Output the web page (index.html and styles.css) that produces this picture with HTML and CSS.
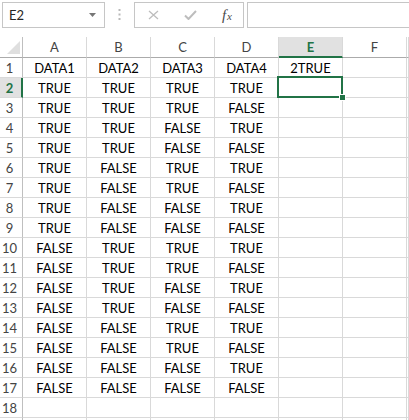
FILE: index.html
```html
<!DOCTYPE html>
<html>
<head>
<meta charset="utf-8">
<link rel="stylesheet" href="styles.css">
</head>
<body>
<div class="formula-bar">
  <div class="name-box">
    <span class="name-text">E2</span>
    <svg class="name-arrow" width="7" height="4" viewBox="0 0 7 4"><path d="M0 0H7L3.5 4Z" fill="#767676"/></svg>
  </div>
  <div class="grip">
    <svg width="3" height="11" viewBox="0 0 3 11"><rect x="0.5" y="0" width="2" height="2" fill="#b9b9b9"/><rect x="0.5" y="4.5" width="2" height="2" fill="#b9b9b9"/><rect x="0.5" y="9" width="2" height="2" fill="#b9b9b9"/></svg>
  </div>
  <div class="fx-box">
    <svg class="fx-icon" width="11" height="10" viewBox="0 0 11 10"><path d="M1 1L10 9M10 1L1 9" stroke="#bdbdbd" stroke-width="1.3" fill="none"/></svg>
    <svg class="fx-icon" width="13" height="10" viewBox="0 0 13 10"><path d="M1 5.5L4.5 9L12 1" stroke="#bdbdbd" stroke-width="2" fill="none"/></svg>
    <span class="fx-label">f<span class="fx-sub">x</span></span>
  </div>
  <div class="formula-input"></div>
</div>

<div class="sheet">
  <div class="corner"><span class="corner-tri"></span></div>
  <div class="col-head">A</div>
  <div class="col-head">B</div>
  <div class="col-head">C</div>
  <div class="col-head">D</div>
  <div class="col-head active">E</div>
  <div class="col-head">F</div>
  <div class="col-head"></div>

  <div class="row-head">1</div><div class="cell">DATA1</div><div class="cell">DATA2</div><div class="cell">DATA3</div><div class="cell">DATA4</div><div class="cell">2TRUE</div><div class="cell"></div><div class="cell"></div>
  <div class="row-head active">2</div><div class="cell">TRUE</div><div class="cell">TRUE</div><div class="cell">TRUE</div><div class="cell">TRUE</div><div class="cell selected"><span class="sel-frame"></span><span class="sel-handle"></span></div><div class="cell"></div><div class="cell"></div>
  <div class="row-head">3</div><div class="cell">TRUE</div><div class="cell">TRUE</div><div class="cell">TRUE</div><div class="cell">FALSE</div><div class="cell"></div><div class="cell"></div><div class="cell"></div>
  <div class="row-head">4</div><div class="cell">TRUE</div><div class="cell">TRUE</div><div class="cell">FALSE</div><div class="cell">TRUE</div><div class="cell"></div><div class="cell"></div><div class="cell"></div>
  <div class="row-head">5</div><div class="cell">TRUE</div><div class="cell">TRUE</div><div class="cell">FALSE</div><div class="cell">FALSE</div><div class="cell"></div><div class="cell"></div><div class="cell"></div>
  <div class="row-head">6</div><div class="cell">TRUE</div><div class="cell">FALSE</div><div class="cell">TRUE</div><div class="cell">TRUE</div><div class="cell"></div><div class="cell"></div><div class="cell"></div>
  <div class="row-head">7</div><div class="cell">TRUE</div><div class="cell">FALSE</div><div class="cell">TRUE</div><div class="cell">FALSE</div><div class="cell"></div><div class="cell"></div><div class="cell"></div>
  <div class="row-head">8</div><div class="cell">TRUE</div><div class="cell">FALSE</div><div class="cell">FALSE</div><div class="cell">TRUE</div><div class="cell"></div><div class="cell"></div><div class="cell"></div>
  <div class="row-head">9</div><div class="cell">TRUE</div><div class="cell">FALSE</div><div class="cell">FALSE</div><div class="cell">FALSE</div><div class="cell"></div><div class="cell"></div><div class="cell"></div>
  <div class="row-head">10</div><div class="cell">FALSE</div><div class="cell">TRUE</div><div class="cell">TRUE</div><div class="cell">TRUE</div><div class="cell"></div><div class="cell"></div><div class="cell"></div>
  <div class="row-head">11</div><div class="cell">FALSE</div><div class="cell">TRUE</div><div class="cell">TRUE</div><div class="cell">FALSE</div><div class="cell"></div><div class="cell"></div><div class="cell"></div>
  <div class="row-head">12</div><div class="cell">FALSE</div><div class="cell">TRUE</div><div class="cell">FALSE</div><div class="cell">TRUE</div><div class="cell"></div><div class="cell"></div><div class="cell"></div>
  <div class="row-head">13</div><div class="cell">FALSE</div><div class="cell">TRUE</div><div class="cell">FALSE</div><div class="cell">FALSE</div><div class="cell"></div><div class="cell"></div><div class="cell"></div>
  <div class="row-head">14</div><div class="cell">FALSE</div><div class="cell">FALSE</div><div class="cell">TRUE</div><div class="cell">TRUE</div><div class="cell"></div><div class="cell"></div><div class="cell"></div>
  <div class="row-head">15</div><div class="cell">FALSE</div><div class="cell">FALSE</div><div class="cell">TRUE</div><div class="cell">FALSE</div><div class="cell"></div><div class="cell"></div><div class="cell"></div>
  <div class="row-head">16</div><div class="cell">FALSE</div><div class="cell">FALSE</div><div class="cell">FALSE</div><div class="cell">TRUE</div><div class="cell"></div><div class="cell"></div><div class="cell"></div>
  <div class="row-head">17</div><div class="cell">FALSE</div><div class="cell">FALSE</div><div class="cell">FALSE</div><div class="cell">FALSE</div><div class="cell"></div><div class="cell"></div><div class="cell"></div>
  <div class="row-head">18</div><div class="cell"></div><div class="cell"></div><div class="cell"></div><div class="cell"></div><div class="cell"></div><div class="cell"></div><div class="cell"></div>
  <div class="row-head"></div><div class="cell"></div><div class="cell"></div><div class="cell"></div><div class="cell"></div><div class="cell"></div><div class="cell"></div><div class="cell"></div>
</div>
</body>
</html>
```

FILE: styles.css
```css
html, body {
  margin: 0;
  padding: 0;
  background: #ffffff;
  overflow: hidden;
}

body {
  width: 409px;
  height: 420px;
  font-family: Lato, "Liberation Sans", sans-serif;
  font-size: 13px;
  color: #000000;
}

/* ---------- formula bar ---------- */
.formula-bar {
  display: flex;
  align-items: flex-start;
  height: 37px;
  padding: 2px 0 0 2px;
  box-sizing: border-box;
}

.name-box {
  display: flex;
  align-items: center;
  justify-content: space-between;
  width: 103px;
  height: 26px;
  box-sizing: border-box;
  border: 1px solid #c6c6c6;
  padding: 0 8px 0 6px;
}

.name-text {
  font-size: 13px;
  color: #262626;
  line-height: 16px;
}

.name-arrow {
  display: block;
}

.grip {
  display: flex;
  justify-content: center;
  width: 29px;
  padding-top: 7px;
}

.grip svg {
  display: block;
}

.fx-box {
  display: flex;
  align-items: center;
  width: 110px;
  height: 26px;
  box-sizing: border-box;
  border: 1px solid #c6c6c6;
  padding: 0 11px 0 13px;
  justify-content: space-between;
}

.fx-icon {
  display: block;
}

.fx-label {
  font-family: "Liberation Serif", serif;
  font-style: italic;
  font-size: 15px;
  color: #4a4a4a;
}

.fx-sub {
  font-size: 11px;
  margin-left: 1px;
}

.formula-input {
  flex: 1;
  margin-left: 3px;
  margin-right: -10px;
  height: 26px;
  box-sizing: border-box;
  border: 1px solid #c6c6c6;
}

/* ---------- sheet grid ---------- */
.sheet {
  display: grid;
  grid-template-columns: 23px repeat(6, 64px) 1fr;
  grid-template-rows: 21px;
  grid-auto-rows: 20px;
}

.corner,
.col-head,
.row-head,
.cell {
  box-sizing: border-box;
}

.corner {
  position: relative;
  border-right: 1px solid #bfbfbf;
  border-bottom: 1px solid #ababab;
}

.corner-tri {
  position: absolute;
  left: 7px;
  top: 4px;
  width: 0;
  height: 0;
  border-left: 13px solid transparent;
  border-bottom: 13px solid #dfdfdf;
}

.col-head {
  border-right: 1px solid #d9d9d9;
  border-bottom: 1px solid #ababab;
  text-align: center;
  line-height: 20px;
  color: #444444;
}

.col-head.active {
  background: #e1e1e1;
  border-bottom: 2px solid #217346;
  color: #217346;
  font-weight: bold;
}

.row-head {
  border-right: 1px solid #bfbfbf;
  border-bottom: 1px solid #d9d9d9;
  text-align: center;
  padding-right: 3px;
  line-height: 20px;
  color: #444444;
}

.row-head.active {
  background: #e1e1e1;
  border-right: 2px solid #217346;
  padding-right: 2px;
  color: #217346;
  font-weight: bold;
}

.cell {
  border-right: 1px solid #d9d9d9;
  border-bottom: 1px solid #d9d9d9;
  text-align: center;
  line-height: 20px;
  white-space: nowrap;
  overflow: hidden;
}

.cell.selected {
  position: relative;
  overflow: visible;
}

.sel-frame {
  position: absolute;
  left: -2px;
  top: -2px;
  right: -1px;
  bottom: -1px;
  border: 2px solid #217346;
}

.sel-handle {
  position: absolute;
  right: -4px;
  bottom: -4px;
  width: 5px;
  height: 5px;
  background: #217346;
  border: 1px solid #ffffff;
}
```
